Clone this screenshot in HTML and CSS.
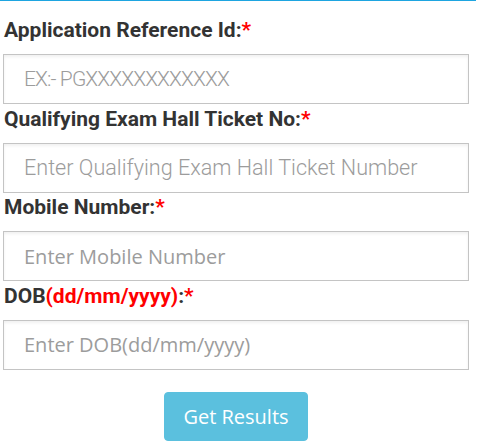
FILE: index.html
```html
<!DOCTYPE html>
<html>
<head>
<meta charset="utf-8">
<link rel="stylesheet" href="styles.css">
</head>
<body>
<div class="page">
  <form class="form">
    <div class="group">
      <label class="label">Application Reference Id:<span class="req">*</span></label>
      <input class="field field-ref" type="text" placeholder="EX:- PGXXXXXXXXXXXX">
    </div>
    <div class="group">
      <label class="label">Qualifying Exam Hall Ticket No:<span class="req">*</span></label>
      <input class="field field-roboto" type="text" placeholder="Enter Qualifying Exam Hall Ticket Number">
    </div>
    <div class="group">
      <label class="label">Mobile Number:<span class="req">*</span></label>
      <input class="field field-open" type="text" placeholder="Enter Mobile Number">
    </div>
    <div class="group">
      <label class="label">DOB<span class="hint">(dd/mm/yyyy)</span>:<span class="req">*</span></label>
      <input class="field field-open" type="text" placeholder="Enter DOB(dd/mm/yyyy)">
    </div>
    <div class="actions">
      <button class="btn" type="button">Get Results</button>
    </div>
  </form>
</div>
</body>
</html>
```
FILE: styles.css
```css
html, body {
  margin: 0;
  padding: 0;
  background: #fff;
}
.page {
  width: 476px;
  border-top: 1px solid #1ea5e0;
}
.form {
  width: 466px;
  padding: 18px 0 0 3px;
  margin: 0;
}
.group {
  display: flex;
  flex-direction: column;
  margin-bottom: 3.5px;
}
.label {
  display: block;
  font-family: Roboto, "Liberation Sans", sans-serif;
  font-weight: 700;
  font-size: 21px;
  line-height: 22px;
  color: #333;
  margin: 0 0 13px 1px;
}
.req, .hint {
  color: #f00;
}
.field {
  box-sizing: border-box;
  width: 466px;
  height: 50px;
  margin: 0;
  padding: 0 0 0 20px;
  border: 1px solid #c4c4c4;
  border-radius: 0;
  box-shadow: inset 0 2px 3px rgba(0, 0, 0, 0.06);
  background: #fff;
  color: #555;
  outline: none;
}
.field::placeholder {
  color: #9c9c9c;
}
.field-ref {
  font-family: Roboto, "Liberation Sans", sans-serif;
  font-weight: 300;
  font-size: 21px;
  letter-spacing: -0.9px;
}
.field-roboto {
  font-family: Roboto, "Liberation Sans", sans-serif;
  font-weight: 300;
  font-size: 21.6px;
}
.field-open {
  font-family: "Open Sans", "Liberation Sans", sans-serif;
  font-weight: 400;
  font-size: 20px;
}
.actions {
  display: flex;
  justify-content: center;
  padding-top: 19px;
}
.btn {
  width: 144px;
  height: 49px;
  border: 1px solid #5bc0de;
  border-radius: 4px;
  background: #5bc0de;
  color: #fff;
  font-family: "Open Sans", "Liberation Sans", sans-serif;
  font-size: 20px;
  padding: 0;
}
```
